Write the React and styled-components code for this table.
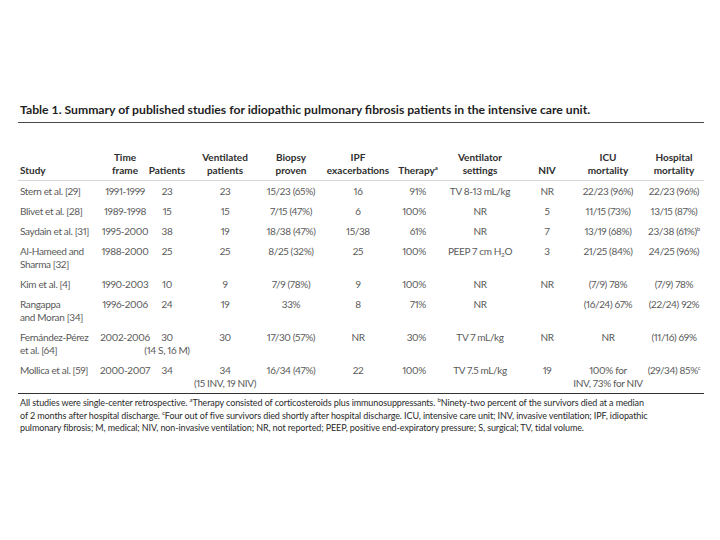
import React from "react";
import styled, { createGlobalStyle } from "styled-components";

const GlobalStyle = createGlobalStyle`
  html, body { margin: 0; padding: 0; background: #ffffff; }
  body { font-family: Lato, "Open Sans", "Liberation Sans", sans-serif; }
`;

const COLS = "84px 46px 38px 78px 54px 80px 40px 84px 50px 72px 60px";

const Page = styled.div`
  width: 720px;
  height: 540px;
  box-sizing: border-box;
  padding: 102px 16px 0 18px;
  background: #fff;
`;

const Title = styled.div`
  font-family: Lato, "Open Sans", sans-serif;
  font-weight: 700;
  font-size: 12.2px;
  line-height: 16px;
  color: #1e1e1e;
  padding: 0 0 4px 2px;
  border-bottom: 1px solid #4a4a4a;
  white-space: nowrap;
`;

const HeaderRow = styled.div`
  display: grid;
  grid-template-columns: ${COLS};
  align-items: end;
  margin-top: 28px;
  padding-bottom: 3px;
  border-bottom: 1px solid #d6d6d6;
`;

const HCell = styled.div`
  display: flex;
  flex-direction: column;
  align-items: ${(p) => (p.$align === "left" ? "flex-start" : "center")};
  padding-left: ${(p) => (p.$align === "left" ? "2px" : "0")};
  font-weight: 700;
  font-size: 10px;
  line-height: 13px;
  color: #2e2e2e;
  white-space: nowrap;
`;

const Row = styled.div`
  display: grid;
  grid-template-columns: ${COLS};
  align-items: start;
  padding: 3.5px 0;
`;

const Cell = styled.div`
  display: flex;
  flex-direction: column;
  align-items: ${(p) =>
    p.$align === "left" ? "flex-start" : p.$align === "right" ? "flex-end" : "center"};
  padding-left: ${(p) => (p.$align === "left" ? "2px" : "0")};
  padding-right: ${(p) => (p.$align === "right" ? "12px" : "0")};
  font-size: 10px;
  line-height: 13px;
  letter-spacing: -0.35px;
  font-variant-numeric: proportional-nums;
  color: #5a5a5a;
  white-space: nowrap;
`;

const Line = styled.div`
  white-space: nowrap;
`;

const Sup = styled.sup`
  font-size: 6px;
  line-height: 0;
  vertical-align: 4px;
`;

const SubScript = styled.sub`
  font-size: 6.5px;
  line-height: 0;
  vertical-align: -2px;
`;

const BottomRule = styled.div`
  border-top: 1.5px solid #333;
`;

const Notes = styled.div`
  font-size: 9px;
  line-height: 12.5px;
  letter-spacing: -0.1px;
  color: #2a2a2a;
  padding: 3px 0 0 2px;
  white-space: nowrap;
`;

const headers = [
  { t: ["Study"], a: "left" },
  { t: ["Time", "frame"] },
  { t: ["Patients"] },
  { t: ["Ventilated", "patients"] },
  { t: ["Biopsy", "proven"] },
  { t: ["IPF", "exacerbations"] },
  { t: [<>Therapy<Sup>a</Sup></>] },
  { t: ["Ventilator", "settings"] },
  { t: ["NIV"] },
  { t: ["ICU", "mortality"] },
  { t: ["Hospital", "mortality"] },
];

const h2o = <>PEEP 7 cm H<SubScript>2</SubScript>O</>;

const rows = [
  [["Stern et al. [29]"], ["1991-1999"], ["23"], ["23"], ["15/23 (65%)"], ["16"], ["91%"], ["TV 8-13 mL/kg"], ["NR"], ["22/23 (96%)"], ["22/23 (96%)"]],
  [["Blivet et al. [28]"], ["1989-1998"], ["15"], ["15"], ["7/15 (47%)"], ["6"], ["100%"], ["NR"], ["5"], ["11/15 (73%)"], ["13/15 (87%)"]],
  [["Saydain et al. [31]"], ["1995-2000"], ["38"], ["19"], ["18/38 (47%)"], ["15/38"], ["61%"], ["NR"], ["7"], ["13/19 (68%)"], [<>23/38 (61%)<Sup>b</Sup></>]],
  [["Al-Hameed and", "Sharma [32]"], ["1988-2000"], ["25"], ["25"], ["8/25 (32%)"], ["25"], ["100%"], [h2o], ["3"], ["21/25 (84%)"], ["24/25 (96%)"]],
  [["Kim et al. [4]"], ["1990-2003"], ["10"], ["9"], ["7/9 (78%)"], ["9"], ["100%"], ["NR"], ["NR"], ["(7/9) 78%"], ["(7/9) 78%"]],
  [["Rangappa", "and Moran [34]"], ["1996-2006"], ["24"], ["19"], ["33%"], ["8"], ["71%"], ["NR"], [""], ["(16/24) 67%"], ["(22/24) 92%"]],
  [["Fernández-Pérez", "et al. [64]"], ["2002-2006"], ["30", "(14 S, 16 M)"], ["30"], ["17/30 (57%)"], ["NR"], ["30%"], ["TV 7 mL/kg"], ["NR"], ["NR"], ["(11/16) 69%"]],
  [["Mollica et al. [59]"], ["2000-2007"], ["34"], ["34", "(15 INV, 19 NIV)"], ["16/34 (47%)"], ["22"], ["100%"], ["TV 7.5 mL/kg"], ["19"], ["100% for", "INV, 73% for NIV"], [<>(29/34) 85%<Sup>c</Sup></>]],
];

const alignFor = (i) => (i === 0 ? "left" : i === 6 ? "right" : "center");

export default function App() {
  return (
    <>
      <GlobalStyle />
      <Page>
        <Title>
          Table 1. Summary of published studies for idiopathic pulmonary fibrosis patients in the intensive care unit.
        </Title>
        <HeaderRow>
          {headers.map((h, i) => (
            <HCell key={i} $align={h.a}>
              {h.t.map((line, j) => (
                <Line key={j}>{line}</Line>
              ))}
            </HCell>
          ))}
        </HeaderRow>
        {rows.map((r, ri) => (
          <Row key={ri}>
            {r.map((lines, ci) => (
              <Cell key={ci} $align={alignFor(ci)}>
                {lines.map((line, li) => (
                  <Line key={li}>{line === "" ? "\u00a0" : line}</Line>
                ))}
              </Cell>
            ))}
          </Row>
        ))}
        <BottomRule />
        <Notes>
          All studies were single-center retrospective. <Sup>a</Sup>Therapy consisted of corticosteroids plus immunosuppressants. <Sup>b</Sup>Ninety-two percent of the survivors died at a median
          <br />
          of 2 months after hospital discharge. <Sup>c</Sup>Four out of five survivors died shortly after hospital discharge. ICU, intensive care unit; INV, invasive ventilation; IPF, idiopathic
          <br />
          pulmonary fibrosis; M, medical; NIV, non-invasive ventilation; NR, not reported; PEEP, positive end-expiratory pressure; S, surgical; TV, tidal volume.
        </Notes>
      </Page>
    </>
  );
}
